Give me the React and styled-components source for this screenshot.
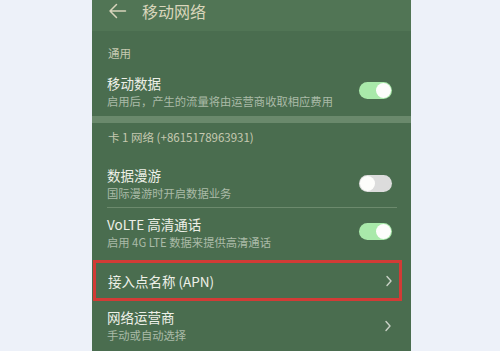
import styled, { createGlobalStyle } from 'styled-components'

const Global = createGlobalStyle`
  body {
    margin: 0;
    background: #edf1f9;
    font-family: "Noto Sans CJK SC", "Noto Sans", sans-serif;
  }
`

const Page = styled.div`
  height: 351px;
  padding-left: 92px;
  overflow: hidden;
`

const Panel = styled.div`
  width: 319px;
  height: 351px;
  background: #4a6d4f;
  display: flex;
  flex-direction: column;
`

const Header = styled.div`
  height: 31px;
  background: #517555;
  display: flex;
  align-items: flex-start;
  gap: 15px;
  padding: 0 0 0 16px;
  box-sizing: border-box;
`

const HeaderTitle = styled.div`
  font-size: 16px;
  line-height: 22px;
  color: #d9d6bb;
`

const SectionLabel = styled.div`
  height: ${p => p.h}px;
  padding: ${p => p.top}px 16px 0;
  box-sizing: border-box;
  font-size: 11.5px;
  line-height: 14px;
  color: #c6c9b1;
`

const Band = styled.div`
  height: 7px;
  background: #6a896c;
`

const Row = styled.div`
  height: ${p => p.h}px;
  display: flex;
  align-items: ${p => (p.$center ? 'center' : 'flex-start')};
  justify-content: space-between;
  padding: ${p => (p.$center ? '0' : '6px')} 19px 0 15px;
  box-sizing: border-box;
  ${p => p.$line && 'border-bottom: 1px solid #6c8a6d; margin: 0 14px 0 15px; padding-left: 0; padding-right: 5px;'}
  ${p => p.$boxed && 'border: 3px solid #d23b36; margin: 2px 9px 0 1px; padding-left: 12px; padding-right: 6px;'}
`

const Texts = styled.div`
  display: flex;
  flex-direction: column;
`

const Title = styled.div`
  font-size: 13.5px;
  line-height: 20px;
  color: #eef0e8;
`

const Sub = styled.div`
  font-size: 11.3px;
  line-height: 16px;
  color: #abbba8;
`

const Track = styled.div`
  width: 33px;
  height: 17px;
  border-radius: 9px;
  background: ${p => (p.on ? '#a9e9aa' : '#dcdcdc')};
  display: flex;
  align-items: center;
  justify-content: ${p => (p.on ? 'flex-end' : 'flex-start')};
  padding: 0 1px;
  box-sizing: border-box;
  margin-top: ${p => p.mt || 0}px;
`

const Knob = styled.div`
  width: 15px;
  height: 15px;
  border-radius: 50%;
  background: #fdfdfb;
`

const Toggle = ({ on, mt }) => (
  <Track on={on} mt={mt}>
    <Knob />
  </Track>
)

const Chevron = ({ mt }) => (
  <svg width="8" height="12" viewBox="0 0 8 12" style={{ marginTop: mt }}>
    <path d="M2 1.5 L6 6 L2 10.5" fill="none" stroke="#c9d1c6" strokeWidth="1.4" strokeLinecap="round" strokeLinejoin="round" />
  </svg>
)

const BackArrow = () => (
  <svg width="19" height="16" viewBox="0 0 19 16" style={{ marginTop: 3 }}>
    <path d="M17.5 8 H2 M8.5 1.5 L2 8 L8.5 14.5" fill="none" stroke="#d7d4bb" strokeWidth="1.5" strokeLinecap="round" strokeLinejoin="round" />
  </svg>
)

export default function App() {
  return (
    <>
      <Global />
      <Page>
        <Panel>
          <Header>
            <BackArrow />
            <HeaderTitle>移动网络</HeaderTitle>
          </Header>
          <SectionLabel h={37} top={15}>通用</SectionLabel>
          <Row h={49}>
            <Texts>
              <Title>移动数据</Title>
              <Sub>启用后，产生的流量将由运营商收取相应费用</Sub>
            </Texts>
            <Toggle on mt={9} />
          </Row>
          <Band />
          <SectionLabel h={36} top={7}>卡 1 网络 (+8615178963931)</SectionLabel>
          <Row h={50} $line>
            <Texts>
              <Title>数据漫游</Title>
              <Sub>国际漫游时开启数据业务</Sub>
            </Texts>
            <Toggle mt={10} />
          </Row>
          <Row h={50}>
            <Texts>
              <Title>VoLTE 高清通话</Title>
              <Sub>启用 4G LTE 数据来提供高清通话</Sub>
            </Texts>
            <Toggle on mt={9} />
          </Row>
          <Row h={42} $center $boxed>
            <Title>接入点名称 (APN)</Title>
            <Chevron />
          </Row>
          <Row h={50}>
            <Texts>
              <Title>网络运营商</Title>
              <Sub>手动或自动选择</Sub>
            </Texts>
            <Chevron mt={13} />
          </Row>
        </Panel>
      </Page>
    </>
  )
}
